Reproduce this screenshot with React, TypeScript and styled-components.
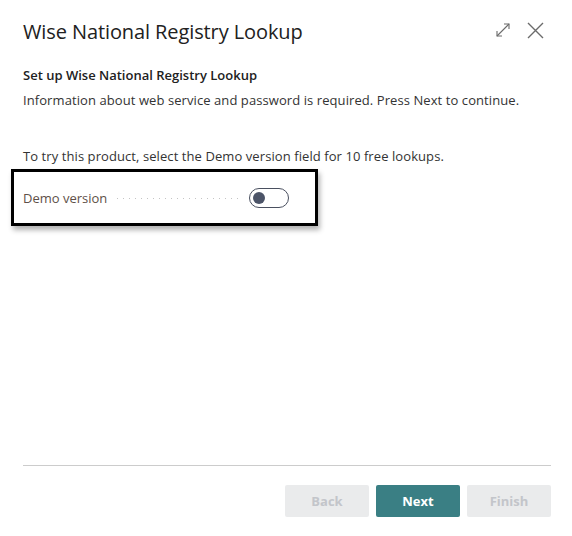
import React from "react";
import styled, { createGlobalStyle } from "styled-components";

const Global = createGlobalStyle`
  html, body { margin: 0; padding: 0; background: #ffffff; }
  body { font-family: "Open Sans", "Noto Sans", Arial, sans-serif; color: #212121; }
`;

const Dialog = styled.div`
  width: 572px;
  height: 536px;
  box-sizing: border-box;
  display: flex;
  flex-direction: column;
  padding: 0 21px 19px 23px;
`;

const Header = styled.div`
  display: flex;
  align-items: center;
  justify-content: space-between;
  height: 62px;
`;

const Title = styled.h1`
  margin: 0;
  font-size: 20px;
  font-weight: 400;
  color: #212121;
  letter-spacing: -0.1px;
`;

const HeaderActions = styled.div`
  display: flex;
  align-items: center;
  gap: 16px;
  margin: -2px 7px 0 0;
`;

const IconButton = styled.button`
  border: 0;
  background: none;
  padding: 0;
  display: flex;
  color: #6b6b6b;
`;

const Heading = styled.div`
  margin-top: 4px;
  font-size: 13px;
  font-weight: 600;
  color: #212121;
`;

const Paragraph = styled.p<{ $gap?: number }>`
  margin: ${(p) => p.$gap ?? 7}px 0 0;
  font-size: 13px;
  color: #333333;
  line-height: 18px;
  letter-spacing: 0.08px;
`;

const FieldFrame = styled.div`
  margin: 4px 0 0 -12px;
  width: 307px;
  height: 57px;
  box-sizing: border-box;
  border: 3px solid #000;
  box-shadow: 2px 4px 5px rgba(0, 0, 0, 0.3);
  display: flex;
  align-items: center;
  padding: 0 0 0 9px;
`;

const FieldLabel = styled.span`
  font-size: 13px;
  color: #5e5048;
  white-space: nowrap;
`;

const Leader = styled.span`
  flex: 0 0 122px;
  margin: 2px 10px 0 10px;
  height: 1px;
  background-image: linear-gradient(to right, #c4c4c4 1px, transparent 1px);
  background-size: 6px 1px;
`;

const Toggle = styled.span<{ $on: boolean }>`
  width: 40px;
  height: 20px;
  box-sizing: border-box;
  border: 1px solid #4a5060;
  border-radius: 10px;
  display: flex;
  align-items: center;
  padding: 0 3px;
  justify-content: ${(p) => (p.$on ? "flex-end" : "flex-start")};
  &::after {
    content: "";
    width: 12px;
    height: 12px;
    border-radius: 50%;
    background: #4c5468;
  }
`;

const Footer = styled.div`
  margin-top: auto;
  border-top: 1px solid #cccccc;
  padding-top: 19px;
  display: flex;
  justify-content: flex-end;
  gap: 7px;
`;

const Button = styled.button<{ $primary?: boolean }>`
  width: 84px;
  height: 32px;
  border: 0;
  border-radius: 2px;
  font-family: inherit;
  font-size: 13px;
  font-weight: 700;
  background: ${(p) => (p.$primary ? "#3a7f84" : "#eaebec")};
  color: ${(p) => (p.$primary ? "#ffffff" : "#c3c5ca")};
`;

export default function App() {
  return (
    <>
      <Global />
      <Dialog>
        <Header>
          <Title>Wise National Registry Lookup</Title>
          <HeaderActions>
            <IconButton aria-label="Expand">
              <svg width="16" height="16" viewBox="0 0 16 16" fill="none" stroke="#6b6b6b" strokeWidth="1.1">
                <path d="M2 14 L14 2" />
                <path d="M9 2 H14 V7" />
                <path d="M2 9 V14 H7" />
              </svg>
            </IconButton>
            <IconButton aria-label="Close">
              <svg width="17" height="17" viewBox="0 0 17 17" fill="none" stroke="#6b6b6b" strokeWidth="1.4">
                <path d="M1 1 L16 16 M16 1 L1 16" />
              </svg>
            </IconButton>
          </HeaderActions>
        </Header>
        <Heading>Set up Wise National Registry Lookup</Heading>
        <Paragraph>Information about web service and password is required. Press Next to continue.</Paragraph>
        <Paragraph $gap={38}>To try this product, select the Demo version field for 10 free lookups.</Paragraph>
        <FieldFrame>
          <FieldLabel>Demo version</FieldLabel>
          <Leader />
          <Toggle $on={false} role="switch" aria-checked="false" />
        </FieldFrame>
        <Footer>
          <Button disabled>Back</Button>
          <Button $primary>Next</Button>
          <Button disabled>Finish</Button>
        </Footer>
      </Dialog>
    </>
  );
}
